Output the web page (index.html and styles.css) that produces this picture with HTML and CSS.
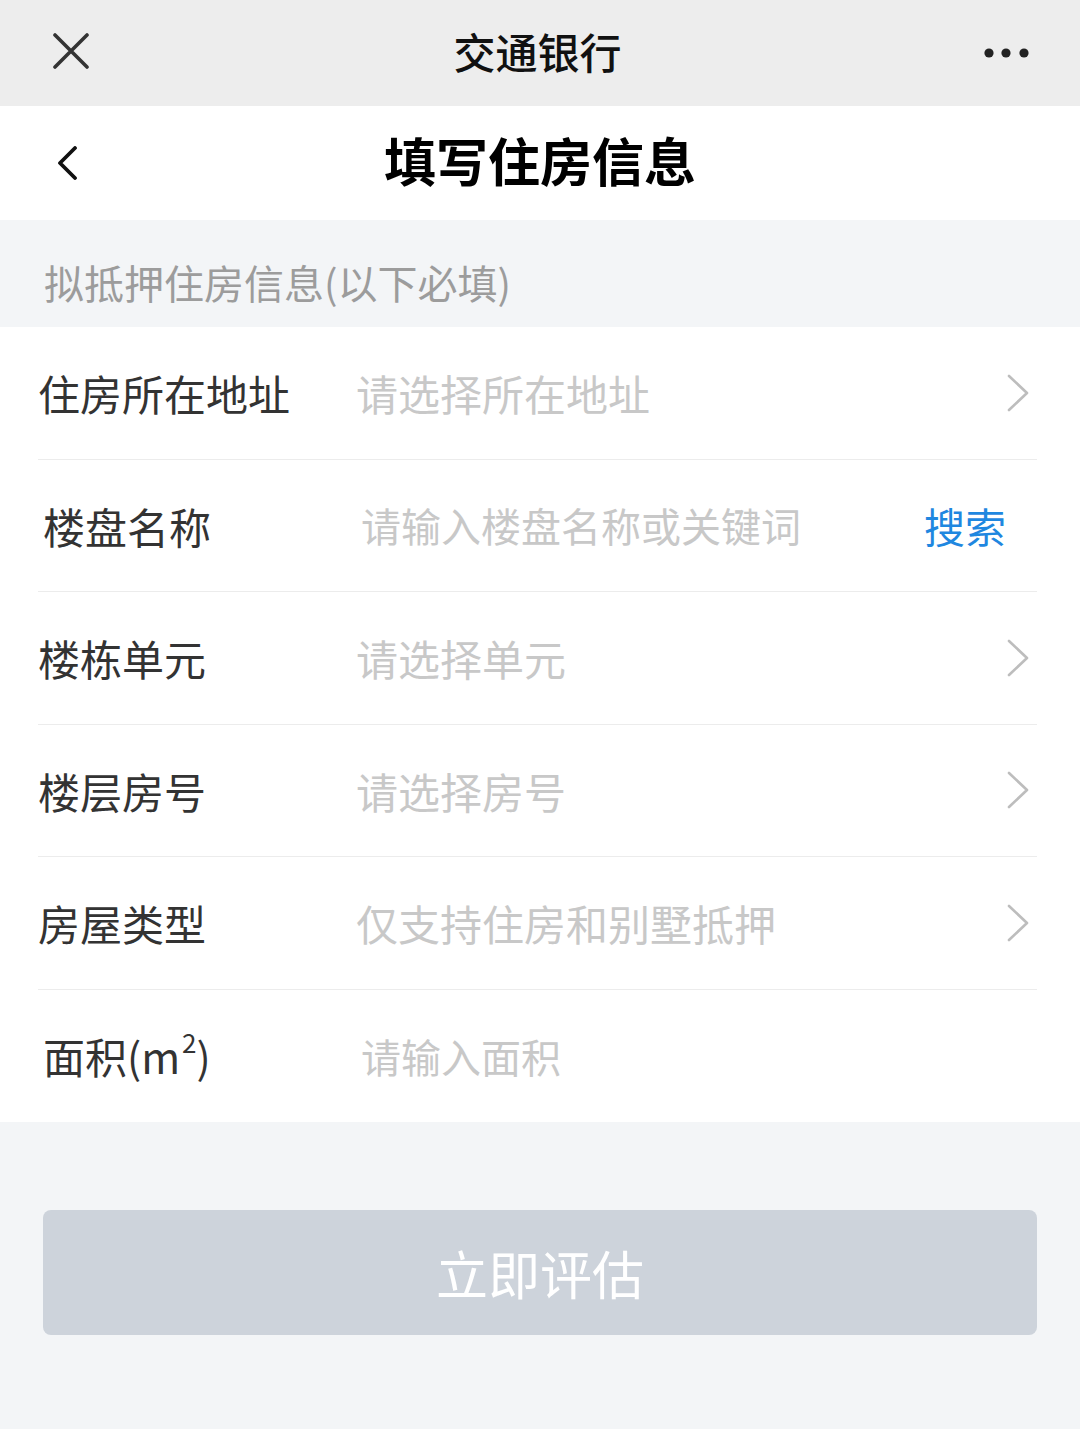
FILE: index.html
```html
<!DOCTYPE html>
<html lang="zh-CN">
<head>
  <meta charset="UTF-8">
  <meta name="viewport" content="width=device-width, initial-scale=1.0">
  <title>填写住房信息</title>
  <link rel="stylesheet" href="styles.css">
</head>
<body>
  <div class="topbar">
    <svg class="close-icon" width="36" height="36" viewBox="0 0 36 36">
      <path d="M2 2 L34 34 M34 2 L2 34" stroke="#333" stroke-width="3.6" stroke-linecap="round" fill="none"/>
    </svg>
    <div class="topbar-title">交通银行</div>
    <svg class="more-icon" width="46" height="12" viewBox="0 0 46 12">
      <circle cx="5" cy="6" r="4.6" fill="#222"/>
      <circle cx="22" cy="6" r="4.6" fill="#222"/>
      <circle cx="40" cy="6" r="4.6" fill="#222"/>
    </svg>
  </div>

  <div class="navbar">
    <svg class="back-icon" width="22" height="34" viewBox="0 0 22 34">
      <path d="M18 2 L3 17 L18 32" stroke="#111" stroke-width="3.8" stroke-linecap="round" stroke-linejoin="round" fill="none"/>
    </svg>
    <h1 class="navbar-title">填写住房信息</h1>
  </div>

  <div class="section-header">拟抵押住房信息(以下必填)</div>

  <div class="form">
    <div class="row">
      <span class="label">住房所在地址</span>
      <span class="value">请选择所在地址</span>
      <svg class="arrow" width="24" height="38" viewBox="0 0 24 38">
        <path d="M3 2 L21 19 L3 36" stroke="#bdbdbd" stroke-width="2.6" stroke-linecap="round" stroke-linejoin="round" fill="none"/>
      </svg>
    </div>
    <div class="row row-input">
      <span class="label">楼盘名称</span>
      <span class="value">请输入楼盘名称或关键词</span>
      <span class="search">搜索</span>
    </div>
    <div class="row">
      <span class="label">楼栋单元</span>
      <span class="value">请选择单元</span>
      <svg class="arrow" width="24" height="38" viewBox="0 0 24 38">
        <path d="M3 2 L21 19 L3 36" stroke="#bdbdbd" stroke-width="2.6" stroke-linecap="round" stroke-linejoin="round" fill="none"/>
      </svg>
    </div>
    <div class="row">
      <span class="label">楼层房号</span>
      <span class="value">请选择房号</span>
      <svg class="arrow" width="24" height="38" viewBox="0 0 24 38">
        <path d="M3 2 L21 19 L3 36" stroke="#bdbdbd" stroke-width="2.6" stroke-linecap="round" stroke-linejoin="round" fill="none"/>
      </svg>
    </div>
    <div class="row">
      <span class="label">房屋类型</span>
      <span class="value">仅支持住房和别墅抵押</span>
      <svg class="arrow" width="24" height="38" viewBox="0 0 24 38">
        <path d="M3 2 L21 19 L3 36" stroke="#bdbdbd" stroke-width="2.6" stroke-linecap="round" stroke-linejoin="round" fill="none"/>
      </svg>
    </div>
    <div class="row row-input">
      <span class="label">面积(m<sup class="sup">2</sup>)</span>
      <span class="value">请输入面积</span>
    </div>
  </div>

  <div class="footer">
    <button class="submit" type="button" disabled>立即评估</button>
  </div>
</body>
</html>
```

FILE: styles.css
```css
body {
  margin: 0;
  font-family: "Noto Sans CJK SC", "Noto Sans", sans-serif;
  background-color: #F3F5F7;
  color: #333;
}

.topbar {
  height: 106px;
  background-color: #EDEDED;
  display: flex;
  align-items: center;
  justify-content: space-between;
  padding: 0 50px 0 53px;
  box-sizing: border-box;
}

.close-icon {
  display: block;
  margin-top: -4px;
}

.topbar-title {
  font-size: 42px;
  font-weight: 500;
  color: #111;
  margin-left: 2px;
  margin-top: -6px;
}

.more-icon {
  display: block;
}

.navbar {
  height: 114px;
  background-color: #FFFFFF;
  display: flex;
  align-items: center;
  padding-left: 57px;
  box-sizing: border-box;
}

.back-icon {
  display: block;
}

.navbar-title {
  flex: 1;
  margin: -8px 0 0 0;
  text-align: center;
  font-size: 52px;
  font-weight: 700;
  color: #000;
  padding-right: 79px;
}

.section-header {
  height: 107px;
  box-sizing: border-box;
  padding: 42px 0 0 44px;
  font-size: 40px;
  line-height: 40px;
  color: #9c9c9c;
}

.form {
  background-color: #FFFFFF;
  padding: 0 43px 0 38px;
}

.row {
  height: 132.5px;
  box-sizing: border-box;
  display: flex;
  align-items: center;
  border-bottom: 1px solid #ECECEC;
  padding: 0 7px 0 0;
}

.row:last-child {
  border-bottom: none;
}

.row-input {
  padding-left: 5px;
}

.label {
  width: 318px;
  flex-shrink: 0;
  font-size: 42px;
  color: #333;
}

.sup {
  font-size: 26px;
  vertical-align: top;
  line-height: 1;
  position: relative;
  top: 4px;
  margin-left: 2px;
}

.value {
  flex: 1;
  font-size: 42px;
  color: #C8C8C8;
}

.row-input .value {
  font-size: 40px;
}

.arrow {
  display: block;
}

.search {
  font-size: 41px;
  color: #1F87E0;
  margin-right: 24px;
}

.footer {
  padding: 88px 43px 0 43px;
}

.submit {
  width: 100%;
  height: 125px;
  border: none;
  border-radius: 8px;
  background-color: #CDD3DB;
  color: #FFFFFF;
  font-family: "Noto Sans CJK SC", "Noto Sans", sans-serif;
  font-size: 52px;
  display: block;
  padding: 0;
}
```
